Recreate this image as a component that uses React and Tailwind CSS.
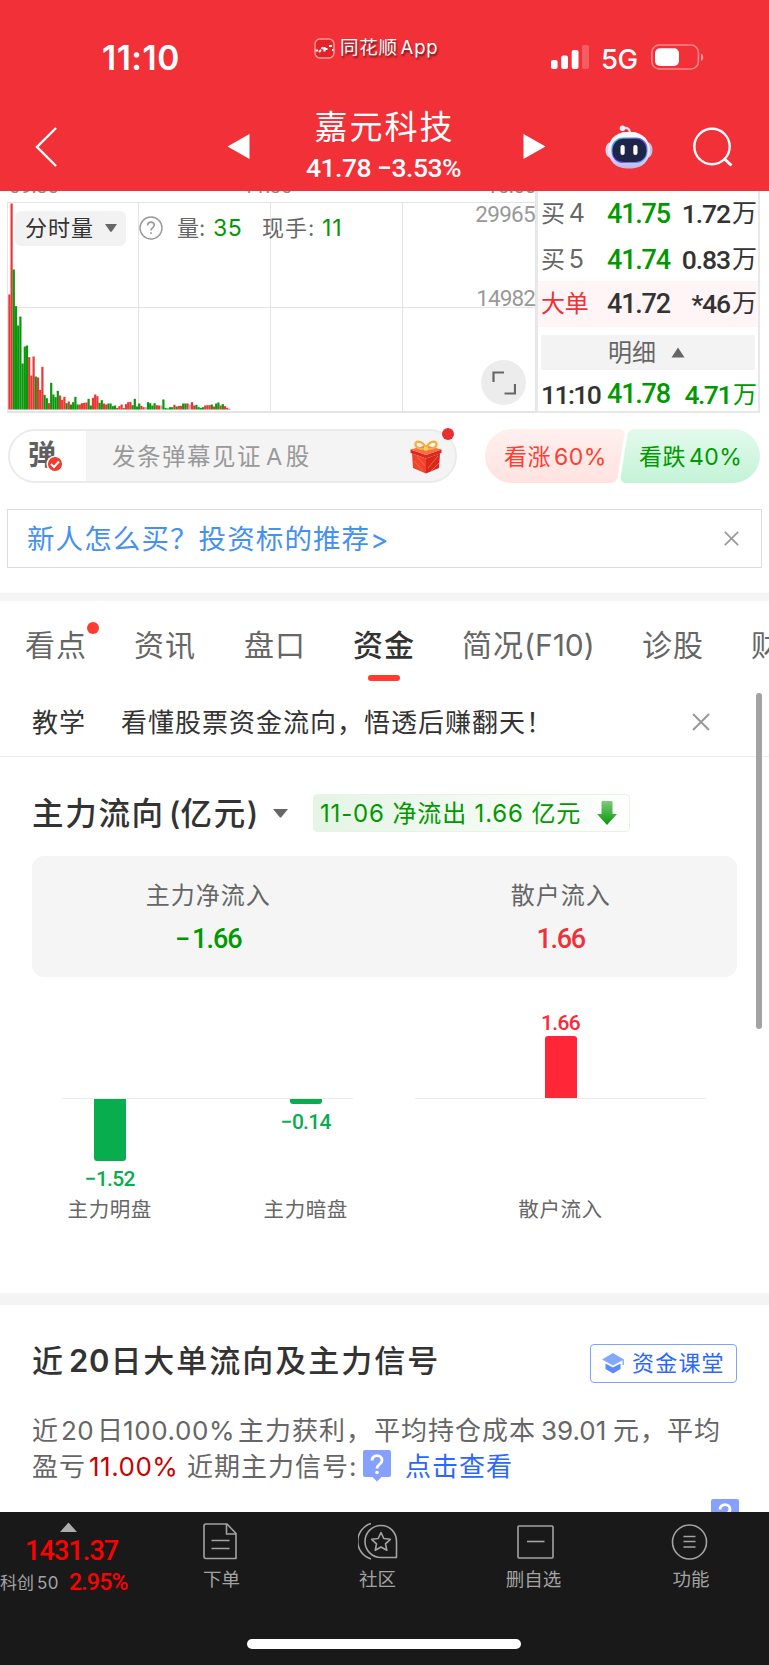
import React from 'react';

// [height, color] per minute since open, r = up, g = down, n = flat
const volume = [
  [345, 'r'], [618, 'r'], [420, 'g'], [310, 'g'], [252, 'g'], [279, 'g'], [138, 'g'], [189, 'g'], [192, 'g'], [157, 'r'],
  [102, 'r'], [159, 'r'], [99, 'g'], [96, 'r'], [59, 'r'], [128, 'r'], [44, 'g'], [34, 'g'], [19, 'r'], [80, 'g'],
  [45, 'g'], [37, 'g'], [56, 'g'], [42, 'r'], [29, 'r'], [38, 'r'], [19, 'g'], [24, 'r'], [15, 'g'], [22, 'g'],
  [38, 'g'], [15, 'g'], [15, 'r'], [19, 'r'], [20, 'r'], [21, 'r'], [32, 'g'], [12, 'g'], [35, 'r'], [45, 'r'],
  [40, 'r'], [20, 'g'], [28, 'g'], [18, 'r'], [15, 'r'], [18, 'g'], [18, 'g'], [10, 'g'], [12, 'g'], [5, 'r'],
  [10, 'r'], [15, 'r'], [4, 'g'], [16, 'r'], [22, 'r'], [23, 'r'], [13, 'g'], [32, 'g'], [9, 'g'], [18, 'g'],
  [11, 'r'], [7, 'r'], [7, 'n'], [22, 'g'], [19, 'g'], [12, 'g'], [19, 'g'], [13, 'r'], [12, 'r'], [12, 'n'],
  [30, 'g'], [5, 'g'], [3, 'g'], [7, 'g'], [7, 'g'], [14, 'r'], [9, 'g'], [11, 'r'], [11, 'r'], [18, 'g'],
  [18, 'g'], [18, 'r'], [15, 'n'], [22, 'r'], [12, 'r'], [14, 'g'], [7, 'g'], [5, 'g'], [7, 'g'], [12, 'r'],
  [13, 'r'], [13, 'r'], [15, 'g'], [9, 'r'], [18, 'g'], [21, 'g'], [12, 'r'], [16, 'g'], [10, 'r'], [5, 'r'], [2, 'r'],
];
const volumeColors = { r: '#ee3535', g: '#0b970b', n: '#b5b5b5' };

const orders = [
  { name: '买', level: '4', price: '41.75', amount: '1.72', row: 'h-[46px]' },
  { name: '买', level: '5', price: '41.74', amount: '0.83', row: 'h-[46px]' },
];

const tabs = [
  { name: '看点', cell: 'ml-[25px] w-[109px]', dot: true },
  { name: '资讯', cell: 'w-[110px]' },
  { name: '盘口', cell: 'w-[109px]' },
  { name: '资金', cell: 'w-[109px]', active: true },
  { name: '简况(F10)', cell: 'w-[180px]' },
  { name: '诊股', cell: 'w-[109px]' },
  { name: '财务', cell: 'w-[60px]' },
];

const StatusBar = () => (
  <div className="flex h-[104px] text-white">
    <div className="ml-[102px] mt-[38px] h-10 w-[212px] text-[33.5px] font-semibold leading-10 tracking-[0.5px]">11:10</div>
    <div className="mt-[36px] flex h-6 w-[237px] items-center">
      <svg width="21" height="21" viewBox="0 0 21 21">
        <rect x="1" y="1" width="19" height="19" rx="5" fill="#e62228" stroke="#ff9c9e" strokeWidth="1.4" />
        <path d="M1.500 12.500h2.500M5 14l2-2" stroke="#fff" strokeWidth="1.800" />
        <path d="M7.500 9.500l1.500 1.500M10.500 9v4.500M12.500 10v2M15 8h3M18 12h1.500" stroke="#fff" strokeWidth="2" />
      </svg>
      <span className="ml-[5px] whitespace-nowrap text-[18.5px] tracking-[0.700px] [text-shadow:1px_2px_2px_rgba(0,0,0,0.55)]">同花顺<span className="ml-[3px] tracking-[0.800px]">App</span></span>
    </div>
    <svg className="mt-[44px]" width="39" height="26" viewBox="0 0 39 26" fill="#fff">
      <rect x="0" y="16" width="6.6" height="9" rx="2" />
      <rect x="10.2" y="11.5" width="6.8" height="13.5" rx="2" />
      <rect x="20.7" y="6" width="6.8" height="19" rx="2" />
      <rect x="31" y="1" width="7" height="24" rx="2" opacity="0.22" />
    </svg>
    <div className="ml-[11px] mt-[39px] w-[50px] text-[27.5px] font-medium leading-10 tracking-[-0.5px]">5G</div>
    <svg className="mt-[44px]" width="54" height="27" viewBox="0 0 54 27">
      <rect x="0.8" y="1" width="46.6" height="24" rx="7.5" fill="none" stroke="#fff" strokeOpacity="0.42" strokeWidth="1.6" />
      <rect x="4" y="4.3" width="24" height="17.6" rx="5" fill="#fff" />
      <path d="M50 9.5c3 1.5 3 6 0 7.500z" fill="#fff" opacity="0.5" />
    </svg>
  </div>
);

const Robot = () => (
  <svg width="48" height="44" viewBox="0 0 48 44">
    <defs>
      <linearGradient id="shell" x1="0" y1="0" x2="0" y2="1">
        <stop offset="0" stopColor="#ffffff" />
        <stop offset="0.6" stopColor="#e6e4fb" />
        <stop offset="1" stopColor="#b9b7e8" />
      </linearGradient>
      <linearGradient id="visor" x1="0" y1="0" x2="1" y2="1">
        <stop offset="0" stopColor="#38d0e8" />
        <stop offset="0.5" stopColor="#7a3df0" />
        <stop offset="1" stopColor="#4ab6ff" />
      </linearGradient>
    </defs>
    <path d="M18 3.500c4-1.500 7 0 7 5" fill="none" stroke="#e3e1fa" strokeWidth="2.200" />
    <circle cx="17.500" cy="3.200" r="2.800" fill="#eceafd" />
    <ellipse cx="5" cy="25" rx="4.500" ry="7.500" fill="#d4d2f3" />
    <ellipse cx="43" cy="25" rx="4.500" ry="7.500" fill="#c4c2ee" />
    <rect x="3" y="7" width="42" height="36.500" rx="18.200" fill="url(#shell)" />
    <rect x="6.500" y="12.500" width="36" height="25.500" rx="11.500" fill="url(#visor)" />
    <rect x="7.600" y="13.800" width="33.800" height="23.200" rx="10.500" fill="#1d2549" />
    <rect x="15.500" y="20" width="4.200" height="10" rx="2.100" fill="#fff" />
    <rect x="28.300" y="20" width="4.200" height="10" rx="2.100" fill="#fff" />
  </svg>
);

const TitleBar = () => (
  <div className="flex h-[87px] text-white">
    <svg className="ml-[34px] mt-[23px]" width="24" height="40" viewBox="0 0 24 40" fill="none" stroke="#fff" strokeWidth="2.400">
      <path d="M22 1 3 20l19 19" />
    </svg>
    <svg className="ml-[169px] mt-[30px]" width="23" height="26" viewBox="0 0 23 26" fill="#fff">
      <path d="M22.500 0v25L0.500 12.500z" />
    </svg>
    <div className="ml-[32px] w-[203px] text-center">
      <div className="mt-[2px] h-[42px] whitespace-nowrap pl-[2px] text-[33px] leading-[42px] tracking-[2px]">嘉元科技</div>
      <div className="mt-[2px] h-[36px] whitespace-nowrap font-['Roboto'] text-[26.5px] font-medium leading-[36px] tracking-[-0.5px]">41.78 −3.53%</div>
    </div>
    <svg className="ml-[38px] mt-[30px]" width="23" height="26" viewBox="0 0 23 26" fill="#fff">
      <path d="M0.500 0v25L22.500 12.500z" />
    </svg>
    <div className="ml-[59px] mt-[21px]"><Robot /></div>
    <svg className="ml-[40px] mt-[23px]" width="42" height="42" viewBox="0 0 42 42" fill="none" stroke="#fff" strokeWidth="2.400">
      <circle cx="19" cy="19.500" r="17.700" />
      <path d="M31.500 32l7 6.500" strokeWidth="3" />
    </svg>
  </div>
);

const VolumeChart = () => (
  <div className="relative h-[224px] w-[536px]">
    <svg width="536" height="224" viewBox="0 0 536 224">
      <path d="M7.500 11.500H535M8 116.500H535M138.500 11v210M270.500 11v210M402.500 11v210M7.500 11v210" stroke="#e4e4e4" fill="none" />
      <path d="M7 221H536" stroke="#e4e4e4" strokeWidth="2" />
      <path d="M535.500 0V222" stroke="#e4e4e4" strokeWidth="1" />
      {volume.map(([h, c], i) => (
        <rect key={i} x={8.3 + i * 2.2} y={218.500 - h / 3} width="2.2" height={h / 3} fill={volumeColors[c]} />
      ))}
    </svg>
    {/* time axis, mostly hidden under the header */}
    <div className="absolute left-0 top-0 h-[3px] w-[536px] overflow-hidden font-['Roboto'] text-[21px] leading-[26px] tracking-[-0.5px] text-[#8a8a8a]">
      <div className="-mt-[18px] flex justify-between pl-[9px]">
        <span>09:30</span><span className="ml-[-10px]">11:30</span><span>15:00</span>
      </div>
    </div>
    <div className="absolute left-[15px] top-[19px] flex h-9 items-center whitespace-nowrap text-[22px] text-[#666]">
      <div className="flex h-[35px] w-[111px] items-center rounded-md bg-[#f2f2f2] pl-[10px] text-[#333]">
        <span className="w-[80px] tracking-[1px]">分时量</span>
        <svg width="12" height="8" viewBox="0 0 12 8" fill="#666"><path d="M0 0h12L6.800 7.500q-.8.700-1.600 0z" /></svg>
      </div>
      <svg className="ml-[13px]" width="24" height="24" viewBox="0 0 24 24" fill="none" stroke="#999" strokeWidth="1.400">
        <circle cx="12" cy="12" r="11" />
        <path d="M8.700 9.500c0-4.500 6.600-4.300 6.600-.3 0 2.600-3.300 2.500-3.300 5.300M12 16.200v1.800" strokeWidth="1.600" />
      </svg>
      <span className="ml-[14px] w-[36px]">量:</span>
      <span className="w-[49px] text-[23px] tracking-[0.500px] text-[#090]">35</span>
      <span className="w-[60px] tracking-[1px]">现手:</span>
      <span className="text-[23px] tracking-[1px] text-[#090]">11</span>
    </div>
    <div className="absolute right-px top-[10px] font-['Roboto'] text-[22.5px] leading-[26px] tracking-[-0.700px] text-[#999]">29965</div>
    <div className="absolute right-px top-[94px] font-['Roboto'] text-[22.5px] leading-[26px] tracking-[-0.900px] text-[#999]">14982</div>
    <div className="absolute right-[10px] top-[169px] flex size-[45px] items-center justify-center rounded-full bg-[#ececec]">
      <svg width="24" height="24" viewBox="0 0 24 24" fill="none" stroke="#666" strokeWidth="2.200">
        <path d="M12 1.500H1.500V11M23 13v9.500H12.500" />
      </svg>
    </div>
  </div>
);

const OrderRow = ({ name, level, price, amount, row, nameColor = 'text-[#666]', priceColor = 'text-[#090]', amountColor = 'text-[#333]' }) => (
  <div className={`flex items-center whitespace-nowrap pl-[3px] pr-px ${row}`}>
    <span className={`w-[66px] text-[24px] tracking-[-0.2px] ${nameColor}`}>{name}{level && <span className="ml-[4px] text-[25px]">{level}</span>}</span>
    <span className={`w-[64px] font-['Roboto'] text-[27px] font-medium tracking-[-1.2px] ${priceColor}`}>{price}</span>
    <span className={`flex flex-1 items-center justify-end ${amountColor}`}>
      <span className="font-['Roboto'] text-[26.500px] font-medium tracking-[-1.100px]">{amount}</span>
      <span className="ml-[2px] text-[25px]">万</span>
    </span>
  </div>
);

const OrderPanel = () => (
  <div className="h-[222px] w-[224px] border-b-2 border-l-2 border-r-2 border-[#e8e8e8]">
    {orders.map((o) => <OrderRow key={o.price} {...o} />)}
    <OrderRow name="大单" price="41.72" amount="*46" row="h-[46px] -mt-[2px] bg-[#fff5f6]" nameColor="text-[#f03038]" priceColor="text-[#333]" />
    <div className="mx-[3px] mt-2 flex h-[35px] items-center bg-[#f3f3f3] pl-[67px] text-[24px] text-[#666]">
      明细
      <svg className="ml-[15px]" width="14" height="11" viewBox="0 0 14 11" fill="#666"><path d="M7 0.500l6.500 10H0.500z" /></svg>
    </div>
    <div className="flex h-[49px] items-center whitespace-nowrap pl-[3px] pr-px text-[#090]">
      <span className="w-[66px] font-['Roboto'] text-[26.500px] font-medium tracking-[-1.600px] text-[#333]">11:10</span>
      <span className="w-[64px] font-['Roboto'] text-[27px] font-medium tracking-[-1.2px]">41.78</span>
      <span className="flex flex-1 items-center justify-end">
        <span className="font-['Roboto'] text-[26.500px] font-medium tracking-[-1.500px]">4.71</span>
        <span className="ml-[2px] text-[24px]">万</span>
      </span>
    </div>
  </div>
);

const Gift = () => (
  <svg width="34" height="34" viewBox="0 0 34 34">
    <path d="M1.500 9.500 17 15l15.500-5.500v3.500L17 18.500 1.500 13z" fill="#d92a1c" />
    <path d="M1.500 9.500 17 5.500l15.500 4L17 15z" fill="#ff6a48" />
    <path d="M3 13.500 17 18.500V33.500L4 28z" fill="#f0432d" />
    <path d="M31 13.500 17 18.500V33.500L30 28z" fill="#d8281c" />
    <path d="M5 21l9 10M8 16l8 10M29 16l-10 12M30 23l-8 8" stroke="#ff7b54" strokeWidth="1" opacity="0.700" />
    <path d="M17 8.500C14 1 7 0 6.500 4c-.5 4 6 5.500 10.500 4.500C21.500 9.500 28 8 27.500 4 27 0 20 1 17 8.500z" fill="none" stroke="#f6b13c" strokeWidth="2.400" />
    <path d="M15 7h4v3.500h-4z" fill="#fbd063" />
  </svg>
);

const DanmuRow = () => (
  <div className="mt-[14px] flex h-[54px]">
    <div className="relative ml-2 flex h-[54px] w-[449px] items-center overflow-visible rounded-full border-2 border-[#ebebeb] bg-[#f4f4f4]">
      <div className="relative h-full w-[76px] rounded-l-full bg-white pl-[18px] text-[28px] font-bold leading-[49px] text-[#5f5f5f]">
        弹
        <svg className="absolute left-[36px] top-[24px]" width="18" height="18" viewBox="0 0 18 18">
          <circle cx="9" cy="9" r="7.800" fill="#f5392d" stroke="#fff" strokeWidth="1.500" />
          <path d="M5 9l3 3 5-5.500" fill="none" stroke="#fff" strokeWidth="2" />
        </svg>
      </div>
      <span className="ml-[26px] mt-[2px] whitespace-nowrap text-[23.500px] tracking-[1.500px] text-[#999]">发条弹幕见证<span className="ml-[4px] mr-[2px]">A</span>股</span>
      <div className="absolute left-[399px] top-[9px]"><Gift /></div>
      <span className="absolute -top-[3px] left-[432px] size-3 rounded-full bg-[#e93030]" />
    </div>
    <div className="relative ml-7 flex w-[141px] items-center overflow-hidden rounded-l-full pl-[19px]">
      <div className="absolute -left-5 right-[5px] top-0 h-full -skew-x-[9deg] rounded-md bg-linear-to-b from-[#fff0ef] to-[#ffe3e0]" />
      <span className="relative mt-[2px] whitespace-nowrap text-[23px] tracking-[0.500px] text-[#ff3d32]">看涨<span className="ml-[3px]">60%</span></span>
    </div>
    <div className="relative -ml-[7px] flex w-[141px] items-center overflow-hidden rounded-r-full pl-[20px]">
      <div className="absolute -right-5 left-[5px] top-0 h-full -skew-x-[9deg] rounded-md bg-linear-to-b from-[#e3faec] to-[#c3f3d7]" />
      <span className="relative mt-[2px] whitespace-nowrap text-[23px] tracking-[0.500px] text-[#090]">看跌<span className="ml-[3px]">40%</span></span>
    </div>
  </div>
);

const Close = ({ size, className }) => (
  <svg className={className} width={size} height={size} viewBox="0 0 18 18" stroke="#999" strokeWidth="2"><path d="M1 1l16 16M17 1L1 17" /></svg>
);

const Tabs = () => (
  <div className="relative flex h-[92px] overflow-hidden whitespace-nowrap text-[30px] tracking-[1px] text-[#666]">
    {tabs.map((t) => (
      <div key={t.name} className={`relative shrink-0 pt-[21px] leading-[46px] ${t.cell} ${t.active ? 'font-medium text-[#333]' : ''}`}>
        {t.name === '简况(F10)' ? <>简况<span className="tracking-[0px]">(F10)</span></> : t.name}
        {t.dot && <span className="absolute left-[62px] top-[21px] size-3 rounded-full bg-[#ff3b30]" />}
        {t.active && <span className="absolute left-[15px] top-[74px] h-[6px] w-[32px] rounded-full bg-[#ff3b30]" />}
      </div>
    ))}
  </div>
);

const FlowChart = () => (
  <div className="flex h-[316px] pl-[62px] font-['Roboto'] text-[21px] font-medium leading-6 tracking-[-0.700px]">
    <div className="flex w-[291px]">
      <div className="mt-[121px] flex h-[130px] w-full border-t border-[#ececec]">
        <div className="flex w-[96px] flex-col items-center">
          <div className="h-[62px] w-[32px] shrink-0 rounded-b-[3px] bg-[#08ad4d]" />
          <div className="mt-[6px] text-[#08ad4d]">−1.52</div>
          <div className="mt-[7px] whitespace-nowrap font-['Inter','Noto_Sans_CJK_SC',sans-serif] text-[20.500px] font-normal tracking-[0.600px] text-[#666]">主力明盘</div>
        </div>
        <div className="ml-[101px] flex w-[95px] flex-col items-center">
          <div className="h-[5px] w-[32px] shrink-0 rounded-b-[3px] bg-[#08ad4d]" />
          <div className="mt-[6px] text-[#08ad4d]">−0.14</div>
          <div className="mt-[64px] whitespace-nowrap font-['Inter','Noto_Sans_CJK_SC',sans-serif] text-[20.500px] font-normal tracking-[0.600px] text-[#666]">主力暗盘</div>
        </div>
      </div>
    </div>
    <div className="ml-[62px] flex w-[291px] flex-col items-center">
      <div className="mt-[34px] text-[#ff2638]">1.66</div>
      <div className="mt-px h-[62px] w-[32px] rounded-t-[3px] bg-[#ff2638]" />
      <div className="h-px w-full bg-[#ececec]" />
      <div className="mt-[99px] font-['Inter','Noto_Sans_CJK_SC',sans-serif] text-[20.500px] font-normal tracking-[0.600px] text-[#666]">散户流入</div>
    </div>
  </div>
);

const Hint = ({ className }) => (
  <svg className={className} width="28" height="33" viewBox="0 0 28 33">
    <path d="M2 0h24q2 0 2 2v23q0 2-2 2h-7.500L14 31.500 9.500 27H2q-2 0-2-2V2q0-2 2-2z" fill="#86a1fd" />
    <path d="M9 10.500c0-6.500 10-6.500 10 0 0 3.800-5 3.800-5 8" fill="none" stroke="#fff" strokeWidth="2.800" />
    <circle cx="14" cy="22.500" r="1.800" fill="#fff" />
  </svg>
);

const NavItem = ({ label, cell, children }) => (
  <div className={`flex shrink-0 flex-col items-center text-[18.500px] text-[#a3a3a3] ${cell}`}>
    <svg className="mt-[10px]" width="40" height="38" viewBox="0 0 40 38" fill="none" stroke="#a3a3a3" strokeWidth="1.600" strokeLinejoin="round">{children}</svg>
    <span className="mt-[6px] whitespace-nowrap leading-[26px]">{label}</span>
  </div>
);

const BottomNav = () => (
  <div className="relative h-[153px] overflow-hidden bg-[#191919]">
    <div className="flex h-[100px]">
      <div className="w-[147px] shrink-0 whitespace-nowrap text-[#f00]">
        <svg className="ml-[60px] mt-[10px] block" width="17" height="10" viewBox="0 0 17 10" fill="#adadad"><path d="M8.500 0.500l8.500 9.500H0z" /></svg>
        <div className="ml-[25px] mt-[2px] font-['Roboto'] text-[27px] font-medium leading-[34px] tracking-[-0.900px]">1431.37</div>
        <div className="mt-[3px] flex h-6 items-center">
          <span className="mt-[2px] w-[69px] text-[17px] text-[#a3a3a3]">科创<span className="ml-[3px] tracking-[0.300px]">50</span></span>
          <span className="font-['Roboto'] text-[23px] font-medium tracking-[-0.800px]">2.95%</span>
        </div>
      </div>
      <NavItem label="下单" cell="w-[149px]">
        <path d="M5 2h21l9 9.500v25H5q-2 0-2-2V4q0-2 2-2zM25.500 2v10H35M10.500 18.500h18M10.500 26.500h18" transform="translate(-1)" />
      </NavItem>
      <NavItem label="社区" cell="w-[163px]">
        <path d="M23 4a16 16 0 1 0 0 32h15.500V20C38.500 11 32 4 23 4z" transform="translate(0 -.5)" />
        <path d="M13 1.500a18.500 18.500 0 0 0 0 35.500M23 10.500l2.800 6 6.500.8-4.800 4.500 1.300 6.500L23 25l-5.800 3.300 1.300-6.500-4.800-4.500 6.500-.8z" />
      </NavItem>
      <NavItem label="删自选" cell="w-[149px]">
        <rect x="4" y="4" width="35" height="32" rx="1" />
        <path d="M13 19.500h17.500" />
      </NavItem>
      <NavItem label="功能" cell="w-[166px]">
        <circle cx="18.500" cy="20" r="17" />
        <path d="M12.500 14.500h12M12.500 19.500h12M12.500 25h12" />
      </NavItem>
    </div>
    <div className="ml-[247px] mt-[27px] h-[10px] w-[274px] rounded-full bg-white" />
  </div>
);

const App = () => (
  <div className="relative h-[1665px] w-[769px] overflow-hidden bg-white font-['Inter','Noto_Sans_CJK_SC',sans-serif]">
    <div className="h-[191px] bg-[#f23038]">
      <StatusBar />
      <TitleBar />
    </div>

    <div className="flex h-[224px]">
      <VolumeChart />
      <OrderPanel />
    </div>

    <DanmuRow />

    {/* Banner */}
    <div className="ml-[7px] mt-[26px] flex h-[59px] w-[755px] items-center border border-[#dcdcdc] pl-[19px]">
      <span className="mt-[3px] w-[697px] whitespace-nowrap text-[27.500px] tracking-[1.100px] text-[#4691ee]">新人怎么买？投资标的推荐&gt;</span>
      <Close size={15} />
    </div>
    <div className="mt-[25px] h-2 bg-[#f5f5f5]" />

    <Tabs />

    {/* Lesson */}
    <div className="flex h-[64px] items-center whitespace-nowrap border-b border-[#ededed] pb-[4px] pl-8 text-[26px] tracking-[1px] text-[#333]">
      <span className="w-[89px]">教学</span>
      <span className="w-[571px]">看懂股票资金流向，悟透后赚翻天！</span>
      <Close size={18} className="-mt-[2px]" />
    </div>

    {/* Fund flow */}
    <div className="mt-[36px] flex h-[40px] items-center whitespace-nowrap pl-8">
      <span className="mt-[2px] w-[241px] text-[31.500px] font-medium tracking-[1.700px] text-[#333]">主力流向<span className="ml-[4px] tracking-[0px]">(</span>亿元<span className="tracking-[0px]">)</span></span>
      <svg width="15" height="9" viewBox="0 0 15 9" fill="#666"><path d="M0 0h15L8.500 8q-1 1-2 0z" /></svg>
      <div className="ml-[25px] flex h-[38px] w-[317px] items-center rounded-[4px] border border-[#e4f5e4] bg-linear-to-r from-[#e5f4e5] to-white pl-[6px] text-[24px] text-[#090]">
        <span className="mt-px w-[277px] tracking-[0.850px]">11-06 净流出 1.66 亿元</span>
        <svg width="20" height="24" viewBox="0 0 20 24">
          <defs>
            <linearGradient id="down" x1="0" y1="0" x2="0" y2="1"><stop offset="0" stopColor="#7ccb7c" /><stop offset="1" stopColor="#079707" /></linearGradient>
          </defs>
          <path d="M5.500 0h9q1 0 1 1v12H20L10 24 0 13h4.500V1q0-1 1-1z" fill="url(#down)" />
        </svg>
      </div>
    </div>
    <div className="ml-8 mt-[23px] flex h-[121px] w-[705px] rounded-xl bg-[#f5f5f5] text-center text-[24px] tracking-[1px] text-[#666]">
      <div className="w-1/2 pt-[25px]">
        <div className="leading-[30px]">主力净流入</div>
        <div className="mt-[12px] font-['Roboto'] text-[27px] font-medium leading-8 tracking-[-1px] text-[#090]"><span className="mr-[3px]">−</span>1.66</div>
      </div>
      <div className="w-1/2 pt-[25px]">
        <div className="leading-[30px]">散户流入</div>
        <div className="mt-[12px] font-['Roboto'] text-[27px] font-medium leading-8 tracking-[-1.300px] text-[#f03038]">1.66</div>
      </div>
    </div>

    <FlowChart />

    <div className="h-3 bg-[#f4f4f4]" />

    {/* 20 day signal */}
    <div className="mt-[36px] flex h-[42px] items-center whitespace-nowrap pl-8">
      <span className="-mt-px w-[558px] text-[31px] font-medium tracking-[2px] text-[#333]">近<span className="ml-[4px] font-semibold tracking-[0.800px]">20</span>日大单流向及主力信号</span>
      <div className="mt-[2px] flex h-[39px] w-[147px] items-center rounded border-[1.500px] border-[#7ea3ff] pl-[11px] text-[22px] tracking-[1.200px] text-[#2b66ff]">
        <svg className="mr-[8px] shrink-0" width="22" height="22" viewBox="0 0 22 22">
          <path d="M11 1 22 7.500 11 13.500 0 7.500z" fill="#82a8ff" />
          <path d="M3.500 11.500 11 15.500l7.500-4v5.500L11 21.500l-7.500-4.500z" fill="#5b8cff" />
          <path d="M21.200 7.500V13" stroke="#82a8ff" strokeWidth="1.400" />
        </svg>
        资金课堂
      </div>
    </div>
    <div className="mt-[30px] whitespace-nowrap pl-8 text-[26px] leading-9 tracking-[1px] text-[#666]">
      <div className="flex h-9">
        <span className="w-[29px]">近</span>
        <span className="w-[36px] tracking-[0.500px]">20</span>
        <span className="w-[26px]">日</span>
        <span className="w-[115px] tracking-[0.600px]">100.00%</span>
        <span className="w-[136px]">主力获利，</span>
        <span className="w-[167px]">平均持仓成本</span>
        <span className="w-[72px] tracking-[0px]">39.01</span>
        <span className="w-[54px]">元，</span>
        <span>平均</span>
      </div>
      <div className="flex h-9">
        <span className="w-[57px]">盈亏</span>
        <span className="w-[98px] tracking-[0.500px] text-[#c00]">11.00%</span>
        <span className="w-[176px]">近期主力信号:</span>
        <Hint className="mt-px" />
        <span className="ml-[14px] text-[#2b66ff]">点击查看</span>
      </div>
    </div>
    <div className="ml-[711px] mt-[14px] h-[13px] overflow-hidden"><Hint /></div>

    <BottomNav />

    {/* scroll thumb */}
    <div className="absolute left-[756px] top-[693px] h-[336px] w-[6px] rounded-full bg-[#a3a3a3]" />
  </div>
);

export default App;
